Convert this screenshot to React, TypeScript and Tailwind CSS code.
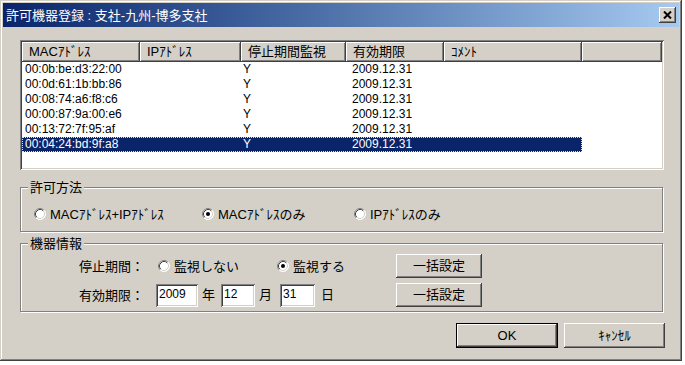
import type { ReactNode } from 'react'

const font = "font-['Liberation_Sans','Noto_Sans_CJK_JP',sans-serif]"

const rows = [
  { mac: '00:0b:be:d3:22:00', ip: '', watch: 'Y', until: '2009.12.31', comment: '' },
  { mac: '00:0d:61:1b:bb:86', ip: '', watch: 'Y', until: '2009.12.31', comment: '' },
  { mac: '00:08:74:a6:f8:c6', ip: '', watch: 'Y', until: '2009.12.31', comment: '' },
  { mac: '00:00:87:9a:00:e6', ip: '', watch: 'Y', until: '2009.12.31', comment: '' },
  { mac: '00:13:72:7f:95:af', ip: '', watch: 'Y', until: '2009.12.31', comment: '' },
  { mac: '00:04:24:bd:9f:a8', ip: '', watch: 'Y', until: '2009.12.31', comment: '' },
]

// header label, column width, left padding of data cells
const columns: [string, number, number][] = [
  ['MACｱﾄﾞﾚｽ', 118, 3],
  ['IPｱﾄﾞﾚｽ', 101, 6],
  ['停止期間監視', 105, 2],
  ['有効期限', 98, 6],
  ['ｺﾒﾝﾄ', 138, 6],
]

const raised = 'bg-[#d4d0c8] shadow-[inset_-1px_-1px_#404040,inset_1px_1px_#fff,inset_-2px_-2px_#808080]'
const sunken = 'shadow-[inset_1px_1px_#808080,inset_-1px_-1px_#fff,inset_2px_2px_#404040,inset_-2px_-2px_#d4d0c8]'

function Radio({ checked }: { checked?: boolean }) {
  return (
    <svg width="12" height="12" viewBox="0 0 12 12" className="shrink-0">
      <circle cx="6" cy="6" r="5.5" fill="#fff" />
      <path d="M2.11 9.89 A5.5 5.5 0 0 1 9.89 2.11" fill="none" stroke="#808080" />
      <path d="M9.89 2.11 A5.5 5.5 0 0 1 2.11 9.89" fill="none" stroke="#fff" />
      <path d="M2.82 9.18 A4.5 4.5 0 0 1 9.18 2.82" fill="none" stroke="#404040" />
      <path d="M9.18 2.82 A4.5 4.5 0 0 1 2.82 9.18" fill="none" stroke="#d4d0c8" />
      {checked && <circle cx="6" cy="6" r="2" fill="#000" />}
    </svg>
  )
}

function Option({ checked, label, width }: { checked?: boolean; label: string; width: number }) {
  return (
    <div className="flex items-center gap-[4px]" style={{ width }}>
      <Radio checked={checked} />
      <span className="text-[13px] leading-[13px]">{label}</span>
    </div>
  )
}

function Button({ children, w, h, isDefault }: { children: ReactNode; w: string; h: string; isDefault?: boolean }) {
  return (
    <div className={`${w} ${h} ${isDefault ? 'border border-black' : ''} flex`}>
      <div className={`flex-1 flex items-center justify-center text-[13px] ${raised}`}>{children}</div>
    </div>
  )
}

function Field({ value, w }: { value: string; w: string }) {
  return (
    <div className={`${w} h-[23px] bg-white ${sunken} pl-[3px] pt-[3px] text-[12px] leading-[14px]`}>{value}</div>
  )
}

function Group({ title, className, children }: { title: string; className: string; children: ReactNode }) {
  return (
    <fieldset className={`w-[643px] border border-[#808080] shadow-[1px_1px_#fff,inset_1px_1px_#fff] ${className}`}>
      <legend className="ml-[7px] px-[2px] text-[13px] leading-[13px] bg-[#d4d0c8]">{title}</legend>
      {children}
    </fieldset>
  )
}

export default function App() {
  return (
    <div className={`w-[685px] h-[365px] bg-white text-black ${font}`}>
      <div className="w-[682px] h-[361px] bg-[#d4d0c8] flex flex-col p-[3px] shadow-[inset_-1px_-1px_#404040,inset_1px_1px_#d4d0c8,inset_-2px_-2px_#808080,inset_2px_2px_#fff]">
        <div className="h-[24px] flex items-center justify-between pl-[3px] pr-[3px] bg-gradient-to-r from-[#0a246a] to-[#a6caf0]">
          <span className="text-white text-[13px] leading-[13px]">許可機器登録 : 支社-九州-博多支社</span>
          <div className={`w-[17px] h-[16px] flex items-center justify-center ${raised}`}>
            <svg width="9" height="8" viewBox="0 0 9 8">
              <path d="M1 0.5 L8 7.5 M8 0.5 L1 7.5" stroke="#000" strokeWidth="2" />
            </svg>
          </div>
        </div>

        <div className="flex-1 pl-[17px] pt-[13px] flex flex-col">
          <div className={`w-[644px] h-[130px] bg-white p-[2px] ${sunken} flex flex-col`}>
            <div className="h-[20px] flex shrink-0">
              {columns.map(([label, width]) => (
                <div key={label} className={`${raised} pl-[7px] pt-[3px] text-[13px] leading-[14px]`} style={{ width }}>
                  {label}
                </div>
              ))}
              <div className={`flex-1 ${raised}`} />
            </div>
            {rows.map((r, i) => {
              const sel = i === rows.length - 1
              const cells = [r.mac, r.ip, r.watch, r.until, r.comment]
              return (
                <div
                  key={r.mac}
                  className={`h-[15px] w-[560px] flex text-[12px] leading-[15px] ${sel ? 'bg-[#0a246a] text-white outline outline-1 outline-dotted outline-offset-[-1px] outline-[#f0e68c]' : ''}`}
                >
                  {cells.map((c, j) => (
                    <div key={j} style={{ width: columns[j][1], paddingLeft: columns[j][2] }}>
                      {c}
                    </div>
                  ))}
                </div>
              )
            })}
          </div>

          <Group title="許可方法" className="mt-[11px] h-[51px]">
            <div className="flex items-center h-[14px] mt-[13px] ml-[13px]">
              <Option label="MACｱﾄﾞﾚｽ+IPｱﾄﾞﾚｽ" width={168} />
              <Option label="MACｱﾄﾞﾚｽのみ" width={152} checked />
              <Option label="IPｱﾄﾞﾚｽのみ" width={140} />
            </div>
          </Group>

          <Group title="機器情報" className="mt-[5px] h-[75px]">
            <div className="flex items-center h-[24px] mt-[4px] ml-[58px]">
              <span className="w-[79px] text-[13px] leading-[13px]">停止期間：</span>
              <Option label="監視しない" width={119} />
              <Option label="監視する" width={119} checked />
              <Button w="w-[86px]" h="h-[24px]">一括設定</Button>
            </div>
            <div className="flex items-center h-[24px] mt-[5px] ml-[58px]">
              <span className="w-[77px] text-[13px] leading-[13px]">有効期限：</span>
              <Field value="2009" w="w-[42px]" />
              <span className="ml-[4px] text-[13px]">年</span>
              <Field value="12" w="w-[34px] ml-[6px]" />
              <span className="ml-[4px] text-[13px]">月</span>
              <Field value="31" w="w-[35px] ml-[8px]" />
              <span className="ml-[6px] text-[13px]">日</span>
              <div className="ml-[62px]">
                <Button w="w-[86px]" h="h-[24px]">一括設定</Button>
              </div>
            </div>
          </Group>

          <div className="mt-[11px] flex gap-[6px] pl-[436px]">
            <Button w="w-[102px]" h="h-[25px]" isDefault>OK</Button>
            <Button w="w-[101px]" h="h-[25px]">ｷｬﾝｾﾙ</Button>
          </div>
        </div>
      </div>
    </div>
  )
}
